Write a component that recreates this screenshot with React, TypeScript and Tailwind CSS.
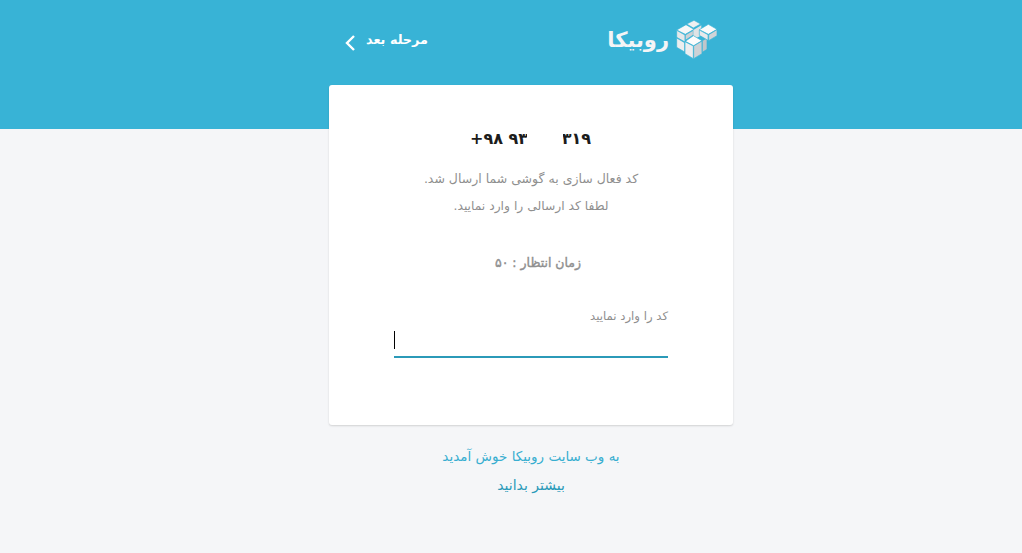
const Logo = () => (
  <svg width="46" height="40" viewBox="12 12 138 120">
    <g stroke="#38b3d6" strokeWidth="2">
      <path d="M50 24l22-11 20 11-22 12z" fill="#eef0f1" />
      <path d="M20 42l28-16 24 14-26 15z" fill="#f7f8f8" />
      <path d="M20 43l25 14v21l-25-14z" fill="#e6e8ea" />
      <path d="M46 57l24-14v14L46 73z" fill="#ccd1d5" />
      <path d="M20 66l24 14v28L20 94z" fill="#eceeef" />
      <path d="M70 42l24-14v30L70 72z" fill="#dfe3e5" stroke="none" />
      <path d="M46 76l24-17 26 15-25 15z" fill="#fcfcfc" />
      <path d="M45 77l25 13v38l-25-15z" fill="#eceef0" />
      <path d="M71 90l25-15v38l-25 15z" fill="#cdd2d6" />
      <path d="M97 74l14-8v34l-14 9z" fill="#bfc6cb" />
      <path d="M88 41l27-16 26 15-26 15z" fill="#fbfbfb" />
      <path d="M88 42l26 14v17L88 58z" fill="#e7e9eb" />
      <path d="M116 56l25-15v18l-25 15z" fill="#cfd4d8" />
    </g>
  </svg>
);

export default function App() {
  return (
    <div dir="rtl" className="min-h-[553px] bg-[#f5f6f8] pl-[40px] font-['DejaVu_Sans',sans-serif]">
      <div className="absolute inset-x-0 top-0 h-[129px] bg-[#38b3d6]" />
      <header className="relative h-[85px]">
        <div dir="ltr" className="mx-auto flex h-[79px] w-[404px] items-center justify-between pr-[13px] pl-[15px]">
          <a className="flex items-start gap-[10px] text-white">
            <svg className="mt-[6px]" width="12" height="18" viewBox="0 0 12 18" fill="none" stroke="white" strokeWidth="2.4">
              <path d="M10 2L3 9l7 7" />
            </svg>
            <span dir="rtl" className="mt-[2px] text-[12.8px] leading-5 font-bold">مرحله بعد</span>
          </a>
          <div className="flex items-center gap-[5px]">
            <span dir="rtl" className="text-[21px] leading-8 font-bold text-[#f4f5f6]">روبیکا</span>
            <Logo />
          </div>
        </div>
      </header>

      <main className="relative mx-auto h-[340px] w-[404px] rounded-[3px] bg-white pt-[44px] text-center shadow-[0_1px_2px_rgba(0,0,0,0.15)]">
        <div dir="ltr" className="relative mx-auto h-[20px] w-[122px] text-[16px] leading-5 font-bold tracking-[-0.5px] whitespace-nowrap text-[#1c1c1c]">
          <span className="block text-left">+۹۸ ۹۳۵</span>
          <span className="absolute top-0 right-[1px]">۳۱۹</span>
          <span className="absolute top-0 left-[57px] h-5 w-[36px] bg-white" />
        </div>
        <p className="mt-[21px] text-[12.5px] leading-[18px] text-[#8f8f8f]">کد فعال سازی به گوشی شما ارسال شد.</p>
        <p className="mt-[9px] text-[12.3px] leading-[18px] text-[#8f8f8f]">لطفا کد ارسالی را وارد نمایید.</p>
        <p className="mt-[39px] pl-[14px] text-[12.5px] leading-[18px] text-[#8f8f8f] [-webkit-text-stroke:0.4px_#8f8f8f]">زمان انتظار : ۵۰</p>
        <div className="mx-[65px] mt-[35px]">
          <label className="block text-right text-[11.7px] leading-[18px] text-[#8f8f8f]">کد را وارد نمایید</label>
          <div className="mt-[5px] flex h-[28px] justify-end border-b-2 border-[#2b9ab8] pt-[1px]">
            <span className="h-[18px] w-px bg-black" />
          </div>
        </div>
      </main>

      <footer className="mt-[21px] text-center leading-5 text-[#38aed0]">
        <p className="text-[13.5px]">به وب سایت روبیکا خوش آمدید</p>
        <p className="mt-[9px] text-[14px] text-[#2b9ab8]">بیشتر بدانید</p>
      </footer>
    </div>
  );
}
